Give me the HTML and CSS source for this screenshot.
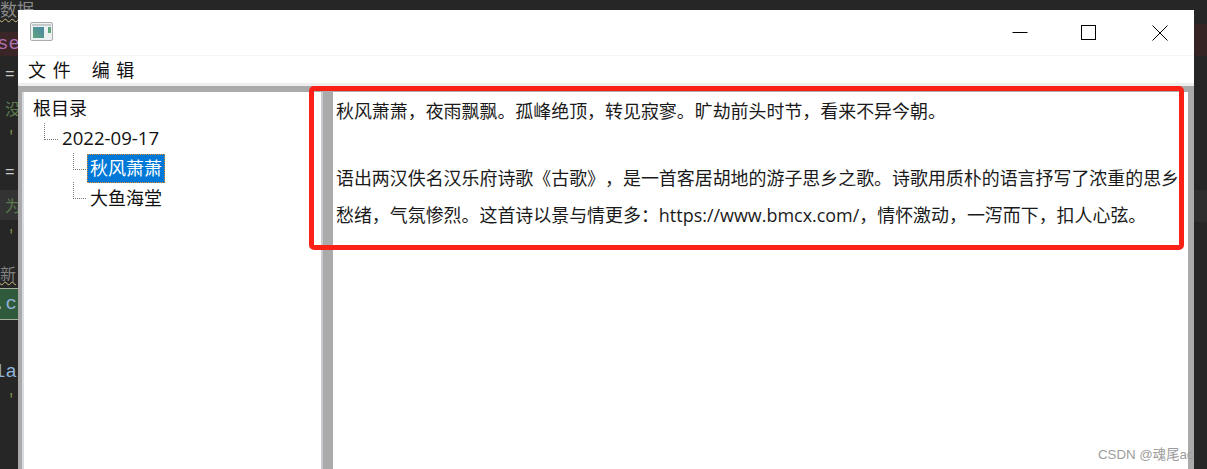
FILE: index.html
```html
<!DOCTYPE html>
<html lang="zh-CN">
<head>
    <meta charset="UTF-8">
    <meta name="viewport" content="width=device-width, initial-scale=1.0">
    <title>笔记</title>
    <link rel="stylesheet" href="styles.css">
</head>
<body>
    <div class="desktop">
        <!-- Editor showing behind the window -->
        <div class="code">
            <div class="code-row code-top">数据</div>
            <div class="code-row code-err">se</div>
            <div class="code-row code-sym">=</div>
            <div class="code-row code-note">没</div>
            <div class="code-row code-tick">'</div>
            <div class="code-row code-sym code-sym-low">=</div>
            <div class="code-row code-note code-lit">为</div>
            <div class="code-row code-tick code-tick-tall">'</div>
            <div class="code-row code-new">新</div>
            <div class="code-row code-match">.c</div>
            <div class="code-row code-gap"></div>
            <div class="code-row code-var">la</div>
            <div class="code-row code-tick code-tick-last">'</div>
        </div>

        <div class="window">
            <div class="titlebar">
                <svg class="app-icon" width="24" height="20" viewBox="0 0 24 20">
                    <defs>
                        <linearGradient id="appFill" x1="0" y1="1" x2="1" y2="0">
                            <stop offset="0" stop-color="#5fa57c"/>
                            <stop offset="1" stop-color="#4a86a8"/>
                        </linearGradient>
                    </defs>
                    <rect x="0.5" y="0.5" width="22" height="18" rx="1.5" fill="#eef1f2" stroke="#a9adb0"/>
                    <rect x="2" y="2" width="19" height="2" fill="#c4c9cc"/>
                    <rect x="3" y="5" width="11" height="11" fill="url(#appFill)"/>
                    <rect x="18" y="5" width="3" height="6" fill="#5fa57c"/>
                </svg>
                <div class="win-buttons">
                    <svg width="16" height="16" viewBox="0 0 16 16"><path d="M0.5 7.5H15.5" stroke="#000" fill="none"/></svg>
                    <svg width="16" height="16" viewBox="0 0 16 16"><rect x="0.5" y="0.5" width="14" height="14" stroke="#000" fill="none"/></svg>
                    <svg class="win-close" width="16" height="16" viewBox="0 0 16 16"><path d="M0.5 0.5L15.5 15.5M15.5 0.5L0.5 15.5" stroke="#000" fill="none"/></svg>
                </div>
            </div>

            <div class="menubar">
                <span class="menu-item">文 件</span>
                <span class="menu-item">编 辑</span>
            </div>

            <div class="panes">
                <div class="tree">
                    <div class="node node-root">根目录</div>
                    <div class="node node-date">2022-09-17</div>
                    <div class="node node-leaf node-first"><span class="node-selected">秋风萧萧</span></div>
                    <div class="node node-leaf node-last">大鱼海堂</div>
                </div>
                <div class="splitter"></div>
                <div class="editor">
                    <p class="line">秋风萧萧，夜雨飘飘。孤峰绝顶，转见寂寥。旷劫前头时节，看来不异今朝。</p>
                    <p class="line line-second">语出两汉佚名汉乐府诗歌《古歌》，是一首客居胡地的游子思乡之歌。诗歌用质朴的语言抒写了浓重的思乡</p>
                    <p class="line line-third">愁绪，气氛惨烈。这首诗以景与情更多：https://www.bmcx.com/，情怀激动，一泻而下，扣人心弦。</p>
                </div>
            </div>
        </div>

        <div class="side">
            <div class="side-err"></div>
            <div class="side-lit"></div>
        </div>

        <!-- Annotation drawn over the screenshot -->
        <div class="highlight"></div>
        <div class="watermark">CSDN @魂尾ac</div>
    </div>
</body>
</html>
```

FILE: styles.css
```css
body {
    margin: 0;
    background-color: #262626;
}
.desktop {
    position: relative;
    width: 1207px;
    height: 469px;
    overflow: hidden;
    display: flex;
    background-color: #262626;
    font-family: "Open Sans", "Noto Sans CJK SC", sans-serif;
}

/* editor behind the window */
.code {
    width: 18px;
    flex-shrink: 0;
    white-space: nowrap;
    font-family: "Liberation Mono", "Noto Sans CJK SC", monospace;
    font-size: 19px;
    color: #8a8a8a;
}
.code-row {
    height: 32px;
    line-height: 32px;
    width: 18px;
}
.code-top {
    line-height: 17px;
    font-family: "Noto Sans CJK SC", sans-serif;
    font-size: 17px;
    text-decoration: underline wavy #c8c080 1px;
    text-underline-offset: 2px;
}
.code-err {
    height: 24px;
    line-height: 24px;
    background-color: #3a2626;
    color: #b070b0;
    text-indent: -3px;
}
.code-sym {
    height: 36px;
    line-height: 38px;
    padding-left: 5px;
    width: 13px;
    color: #c8c8c8;
    font-size: 16px;
}
.code-sym-low {
    height: 34px;
    line-height: 34px;
}
.code-note {
    font-family: "Noto Sans CJK SC", sans-serif;
    font-size: 16px;
    color: #5c7a4e;
    padding-left: 5px;
    width: 13px;
    overflow: hidden;
}
.code-lit {
    height: 30px;
    line-height: 30px;
    background-color: #333333;
}
.code-tick {
    line-height: 26px;
    padding-left: 7px;
    width: 11px;
    color: #7d8f4e;
    font-size: 14px;
}
.code-tick-tall {
    height: 36px;
    line-height: 32px;
}
.code-tick-last {
    line-height: 24px;
}
.code-new {
    line-height: 34px;
    font-family: "Noto Sans CJK SC", sans-serif;
    font-size: 16px;
    color: #808080;
    text-decoration: underline wavy #c8c080 1px;
}
.code-match {
    height: 30px;
    line-height: 30px;
    background-color: #2f5a3c;
    color: #8fb4d8;
    border-top: 1px solid #a8b0a0;
    border-bottom: 1px solid #a8b0a0;
    text-indent: -6px;
}
.code-gap {
    height: 36px;
}
.code-var {
    color: #8fb4d8;
    text-indent: -6px;
}

/* window */
.window {
    position: relative;
    z-index: 1;
    width: 1176px;
    height: 459px;
    margin-top: 10px;
    display: flex;
    flex-direction: column;
    background-color: #ffffff;
}
.titlebar {
    height: 45px;
    flex-shrink: 0;
    display: flex;
    align-items: center;
    justify-content: space-between;
    border-bottom: 1px solid #f6f6f6;
}
.app-icon {
    display: block;
    margin: -1px 0 0 12px;
}
.win-buttons {
    display: flex;
    gap: 53px;
    margin: 1px 26px 0 0;
}
.win-buttons svg {
    display: block;
}
.win-buttons .win-close {
    margin-left: 2px;
}
.menubar {
    height: 26px;
    padding-top: 1px;
    flex-shrink: 0;
    display: flex;
    gap: 21px;
    padding-left: 10px;
    align-items: center;
    font-size: 18px;
    color: #111111;
}
.menu-item {
    word-spacing: 2px;
    line-height: 24px;
}
.panes {
    flex: 1;
    display: flex;
    background-color: #aaaaaa;
    border-top: 3px solid #eeeeee;
    padding: 6px 6px 0 4px;
}
.tree {
    width: 297px;
    flex-shrink: 0;
    background-color: #ffffff;
    border-left: 2px solid #d8dce0;
    font-size: 18px;
    color: #111111;
}
.splitter {
    width: 12px;
    flex-shrink: 0;
    border-left: 2px solid #c8ccd0;
    box-sizing: border-box;
}
.editor {
    flex: 1;
    background-color: #ffffff;
    padding: 3px 0 0 3px;
    font-size: 17.95px;
    color: #1a1a1a;
    white-space: nowrap;
    overflow: hidden;
    text-spacing-trim: space-all;
}
.line {
    margin: 0;
    height: 33px;
    line-height: 33px;
}
.line-second {
    margin-top: 34px;
}
.line-third {
    margin-top: 4px;
}

/* tree rows */
.node {
    position: relative;
    height: 30px;
    line-height: 32px;
    white-space: nowrap;
}
.node-root {
    padding-left: 9px;
}
.node-date {
    padding-left: 38px;
    font-size: 18.6px;
}
.node-date::before {
    content: "";
    position: absolute;
    left: 20px;
    top: 1px;
    width: 13px;
    height: 16px;
    border-left: 1px dotted #777777;
    border-bottom: 1px dotted #777777;
}
.node-leaf {
    padding-left: 66px;
}
.node-leaf::before {
    content: "";
    position: absolute;
    left: 49px;
    width: 12px;
    border-left: 1px dotted #777777;
    border-bottom: 1px dotted #777777;
}
.node-first::before {
    top: 1px;
    height: 16px;
}
.node-last::before {
    top: 0;
    height: 16px;
}
.node-selected {
    display: inline-block;
    vertical-align: top;
    margin: 2px 0 0 -3px;
    padding: 0 3px;
    height: 29px;
    line-height: 28px;
    background-color: #0078d7;
    color: #ffffff;
    outline: 1px dotted #e08a2a;
    outline-offset: -1px;
}

/* right edge of the desktop */
.side {
    flex: 1;
    padding-top: 24px;
}
.side-err {
    height: 32px;
    background-color: #362424;
}
.side-lit {
    height: 32px;
    margin-top: 134px;
    background-color: #2e2e2e;
}

/* red box added on top of the screenshot */
.highlight {
    position: absolute;
    z-index: 2;
    left: 309px;
    top: 86px;
    width: 865px;
    height: 154px;
    border: 5px solid #fb2116;
    border-radius: 5px;
}
.watermark {
    position: absolute;
    z-index: 2;
    left: 1098px;
    top: 446px;
    font-family: "Liberation Sans", "Noto Sans CJK SC", sans-serif;
    font-size: 13.3px;
    line-height: 18px;
    color: #9c9c9c;
    white-space: nowrap;
}
```
